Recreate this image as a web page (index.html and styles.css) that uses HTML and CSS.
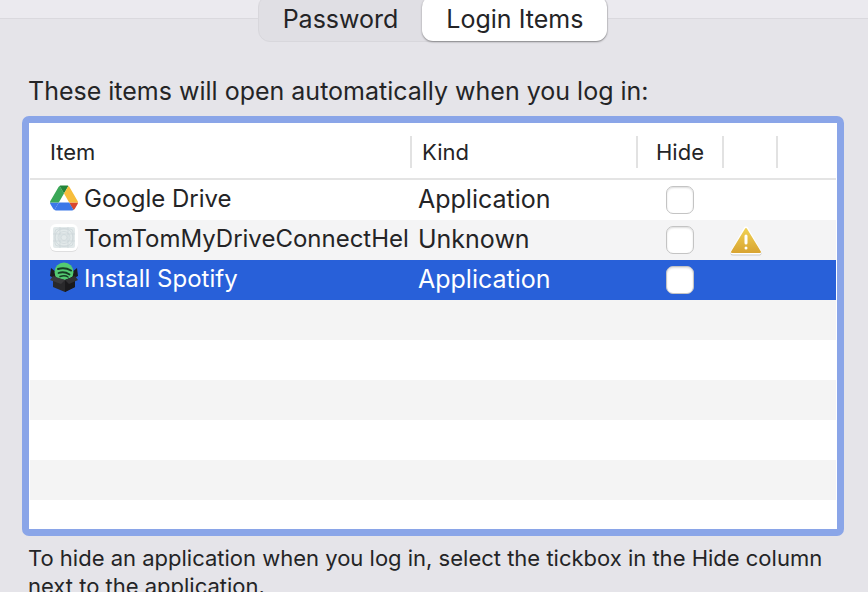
FILE: index.html
```
<!DOCTYPE html>
<html lang="en">

<head>
    <meta charset="UTF-8" />
    <meta name="viewport" content="width=device-width, initial-scale=1.0" />
    <title>Login Items</title>
    <link rel="stylesheet" href="styles.css">
</head>

<body>
    <main class="pane">
        <nav class="tabs">
            <button type="button" class="tab">Password</button>
            <button type="button" class="tab active">Login Items</button>
        </nav>

        <h1 class="title">These items will open automatically when you log in:</h1>

        <div class="list">
            <table class="items">
                <colgroup>
                    <col>
                    <col class="col-kind">
                    <col class="col-hide">
                    <col class="col-status">
                    <col class="col-end">
                </colgroup>
                <thead>
                    <tr>
                        <th><div class="head">Item</div></th>
                        <th><div class="head">Kind</div></th>
                        <th><div class="head center">Hide</div></th>
                        <th><div class="head"></div></th>
                        <th><div class="head"></div></th>
                    </tr>
                </thead>
                <tbody>
                    <tr>
                        <td>
                            <div class="name">
                                <svg class="icon" viewBox="0 0 87.3 78">
                                    <path fill="#3c78e8" d="M6.600 66.850l3.850 6.650c.8 1.400 1.950 2.500 3.300 3.300L27.500 53H0c0 1.550.4 3.100 1.200 4.500z" />
                                    <path fill="#3aa757" d="M43.650 25L29.900 1.200c-1.350.8-2.500 1.900-3.300 3.300l-25.400 44A9 9 0 0 0 0 53h27.500z" />
                                    <path fill="#d9472f" d="M73.550 76.800c1.350-.8 2.500-1.900 3.300-3.300l1.600-2.750L86.100 57.500c.8-1.400 1.200-2.950 1.200-4.500H59.800l5.850 11.500z" />
                                    <path fill="#238539" d="M43.650 25L57.400 1.200C56.050.4 54.500 0 52.900 0H34.400c-1.600 0-3.150.45-4.500 1.200z" />
                                    <path fill="#3c78e8" d="M59.800 53H27.500L13.750 76.800c1.350.8 2.900 1.200 4.500 1.200h50.800c1.600 0 3.150-.45 4.500-1.200z" />
                                    <path fill="#f7bd3b" d="M73.400 26.500l-12.700-22c-.8-1.400-1.950-2.500-3.300-3.300L43.650 25 59.800 53h27.450c0-1.550-.4-3.100-1.200-4.500z" />
                                </svg>
                                <label for="hideDrive">Google Drive</label>
                            </div>
                        </td>
                        <td class="kind">Application</td>
                        <td class="hide"><input type="checkbox" id="hideDrive" class="check" /></td>
                        <td></td>
                        <td></td>
                    </tr>
                    <tr>
                        <td>
                            <div class="name">
                                <svg class="icon" viewBox="0 0 28 28">
                                    <rect x="0" y="1" width="28" height="27" rx="6" fill="#dededf" />
                                    <rect width="28" height="27" rx="6" fill="#fff" />
                                    <rect x="3" y="3" width="22" height="21" rx="2" fill="#e2e9ea" />
                                    <g fill="none" stroke="#cbd6d8" stroke-width=".7">
                                        <rect x="5" y="5" width="18" height="17" rx="3" />
                                        <circle cx="14" cy="13.500" r="9" />
                                        <circle cx="14" cy="13.500" r="6" />
                                        <circle cx="14" cy="13.500" r="3" />
                                        <path d="M3 10h22M3 17h22M10 3v21M18 3v21" />
                                    </g>
                                </svg>
                                <label for="hideTomTom">TomTomMyDriveConnectHel</label>
                            </div>
                        </td>
                        <td class="kind">Unknown</td>
                        <td class="hide"><input type="checkbox" id="hideTomTom" class="check" /></td>
                        <td class="status">
                            <svg class="warning" viewBox="0 0 34 32">
                                <defs>
                                    <linearGradient id="gold" x1="0" y1="0" x2="0" y2="1">
                                        <stop offset="0" stop-color="#efd052" />
                                        <stop offset="1" stop-color="#d9a532" />
                                    </linearGradient>
                                </defs>
                                <path fill="#c9c9c9" stroke="#c9c9c9" stroke-width="5" stroke-linejoin="round" d="M17 6L30 29H4z" />
                                <path fill="#fff" stroke="#fff" stroke-width="5" stroke-linejoin="round" d="M17 5L30 28H4z" />
                                <path fill="url(#gold)" stroke="url(#gold)" stroke-width="2" stroke-linejoin="round" d="M17 5L31 28H3z" />
                                <path stroke="#fff" stroke-width="3" stroke-linecap="round" d="M17 12v7M17 24v0" />
                            </svg>
                        </td>
                        <td></td>
                    </tr>
                    <tr class="selected">
                        <td>
                            <div class="name">
                                <svg class="icon" viewBox="0 0 28 28">
                                    <path fill="#1c1c1e" d="M4 9h20v8H4z" />
                                    <path fill="#1c1c1e" d="M1 4l5 4v7l-6-3zM27 4l-5 4v7l6-3z" />
                                    <circle cx="14" cy="8" r="9.500" fill="#54cb72" />
                                    <g fill="none" stroke="#173d24" stroke-linecap="round">
                                        <path stroke-width="2" d="M8 5q7-2 13 1.500" />
                                        <path stroke-width="1.800" d="M8.500 9q6-2 11 1.500" />
                                        <path stroke-width="1.500" d="M10 12.500q5-1.500 8 .5" />
                                    </g>
                                    <path fill="#29292b" d="M3 13l12 3 10-4v11l-10 5-12-5z" />
                                    <path fill="#1a1a1c" d="M15 16l10-4v11l-10 5z" />
                                    <path fill="#3a3a3c" d="M3 12l12 4-4 4-11-4z" />
                                    <path fill="#303032" d="M25 12l-10 4 4 4 9-4z" />
                                </svg>
                                <label for="hideSpotify">Install Spotify</label>
                            </div>
                        </td>
                        <td class="kind">Application</td>
                        <td class="hide"><input type="checkbox" id="hideSpotify" class="check" /></td>
                        <td></td>
                        <td></td>
                    </tr>
                </tbody>
            </table>
            <div class="empty"></div>
        </div>

        <p class="hint">To hide an application when you log in, select the tickbox in the Hide column next to the application.</p>
    </main>
</body>

</html>
```
FILE: styles.css
```
* {
    box-sizing: border-box;
}

body {
    margin: 0;
    padding-top: 18px;
    background: #ebeaef;
    color: #242426;
    font-family: Inter, 'Liberation Sans', sans-serif;
    font-size: 25px;
}

.pane {
    padding: 0 24px 0 22px;
    background: #e5e4e9;
    border-top: 1px solid #dad9de;
}

/* segmented control */
.tabs {
    display: flex;
    width: fit-content;
    margin: -24px auto 0;
    border: 1px solid #d8d7dc;
    border-radius: 12px;
    background: #e0dfe4;
}

.tab {
    height: 45px;
    padding: 0 24px;
    border: 0;
    border-radius: 11px;
    background: none;
    color: inherit;
    font: inherit;
}

.tab.active {
    background: #fff;
    box-shadow: 0 1px 2px rgba(0, 0, 0, 0.4);
}

.title {
    margin: 33px 6px 9px;
    font-size: 25px;
    font-weight: 400;
    line-height: 32px;
}

.list {
    border: 7px solid #8aa5e8;
    border-radius: 7px;
    padding: 0 1px 1px;
    background: #fff;
}

.items {
    width: 100%;
    table-layout: fixed;
    border-spacing: 0;
}

.col-kind {
    width: 226px;
}

.col-hide {
    width: 86px;
}

.col-status {
    width: 54px;
}

.col-end {
    width: 60px;
}

th,
td {
    padding: 0;
    text-align: left;
    font-weight: 400;
}

th {
    height: 57px;
    padding-top: 2px;
    border-bottom: 2px solid #e4e4e4;
    font-size: 22px;
}

.head {
    height: 32px;
    padding-left: 10px;
    border-left: 2px solid #e2e2e2;
    line-height: 32px;
}

.head.center {
    padding: 0;
    text-align: center;
}

th:first-child .head {
    padding-left: 20px;
    border: 0;
}

td {
    height: 40px;
    white-space: nowrap;
}

tbody tr:nth-child(even) {
    background: #f4f4f5;
}

tbody .selected {
    background: #2860d9;
    color: #fff;
}

.name {
    display: flex;
    align-items: center;
    gap: 6px;
    height: 36px;
    margin-bottom: 4px;
    padding-left: 20px;
    font-size: 24px;
}

.icon {
    flex: none;
    width: 28px;
    height: 28px;
    overflow: visible;
}

.kind {
    padding-left: 8px;
    line-height: 38px;
    vertical-align: top;
}

.hide {
    padding-left: 2px;
}

.check {
    appearance: none;
    display: block;
    width: 28px;
    height: 28px;
    margin: 0 auto;
    border: 1px solid #c4c4c4;
    border-radius: 7px;
    background: #fff;
    box-shadow: inset 0 1px 2px rgba(0, 0, 0, 0.14);
}

.status {
    padding-left: 7px;
}

.warning {
    display: block;
    width: 34px;
    height: 32px;
    overflow: visible;
}

/* striped space under the last item */
.empty {
    height: 228px;
    background: repeating-linear-gradient(#f4f4f4 0 40px, #fff 40px 80px);
}

.hint {
    margin: 0;
    padding: 8px 6px;
    font-size: 22px;
    line-height: 28px;
}
```
